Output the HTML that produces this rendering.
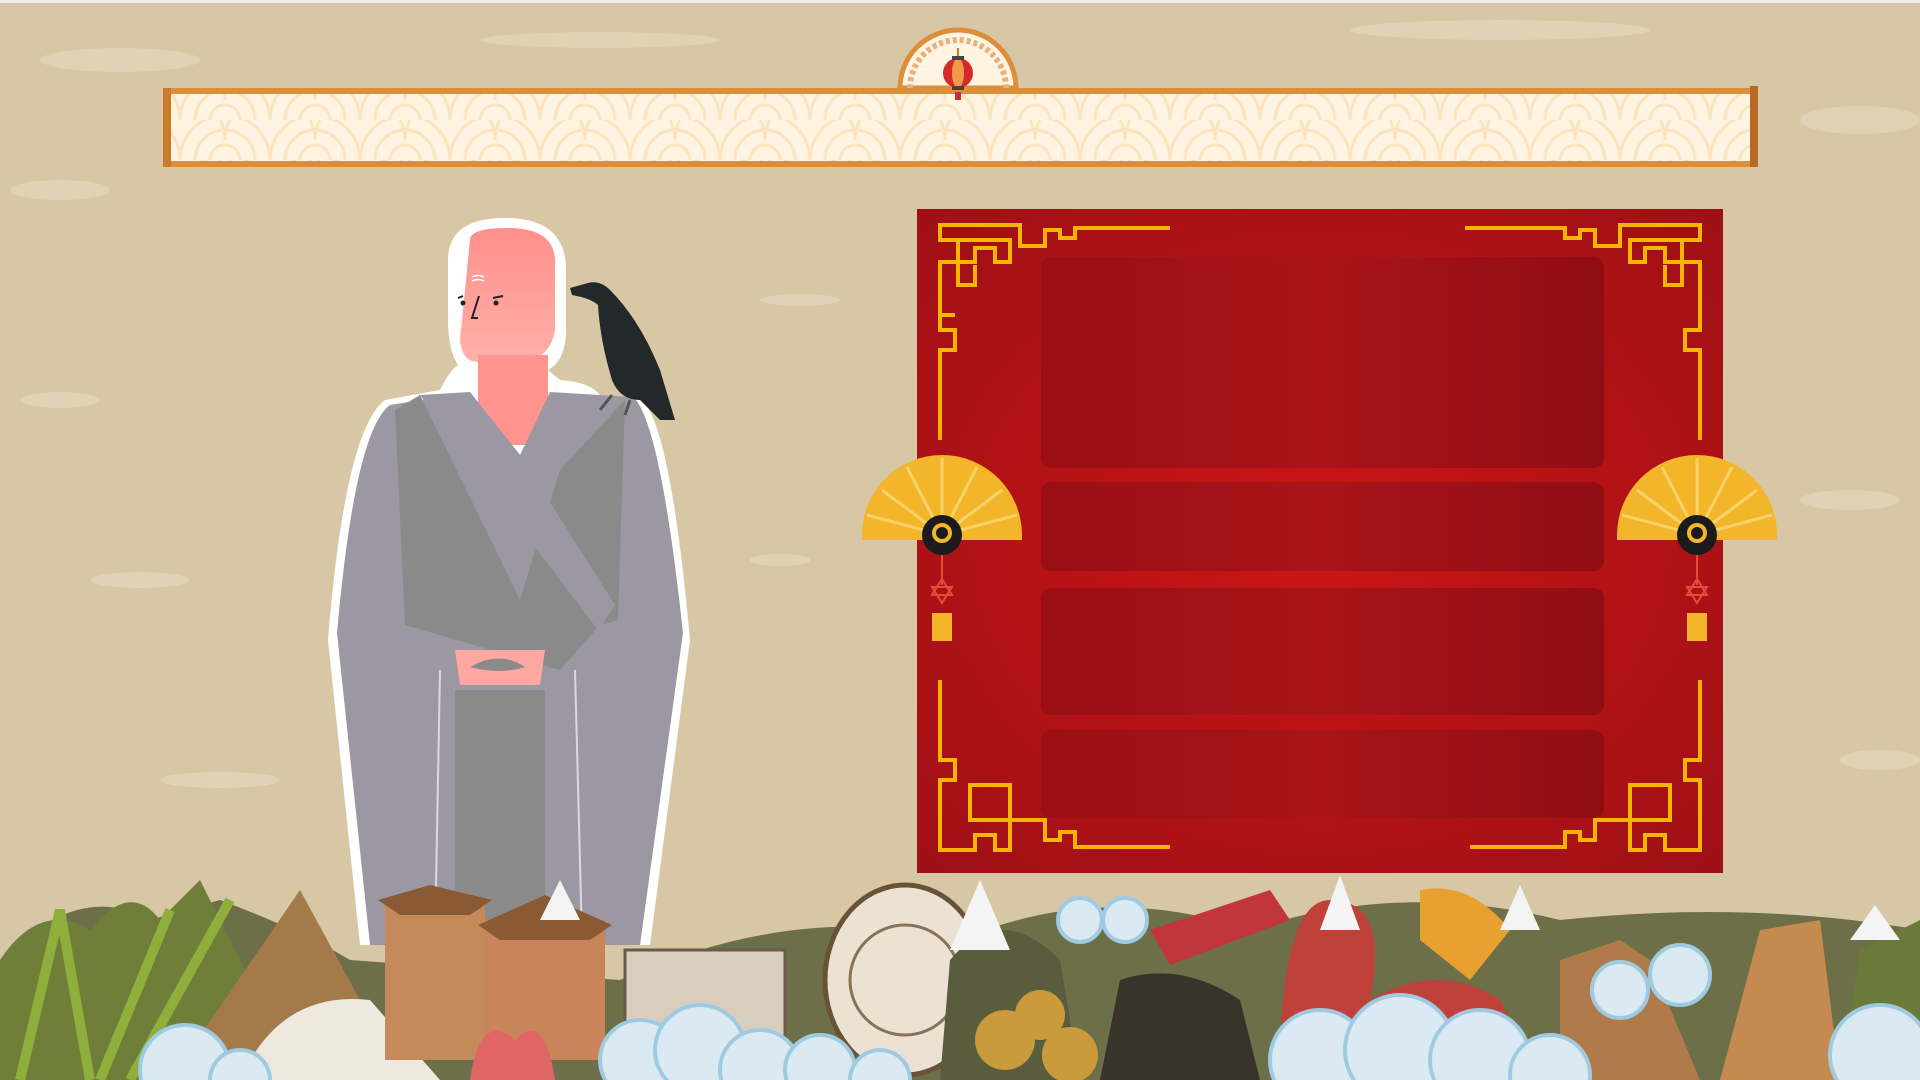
<!DOCTYPE html>
<html><head><meta charset="utf-8"><style>
html,body{margin:0;padding:0;width:1920px;height:1080px;overflow:hidden;background:#d8c7a4;font-family:"Liberation Sans",sans-serif}
svg{position:absolute;left:0;top:0}
</style></head><body>
<svg width="1920" height="1080" viewBox="0 0 1920 1080">
<defs>
<radialGradient id="rg" cx="0.5" cy="0.5" r="0.7">
<stop offset="0" stop-color="#cc1414"/><stop offset="1" stop-color="#9e1016"/></radialGradient>
<linearGradient id="row" x1="0" x2="1"><stop offset="0" stop-color="#9a0f14"/><stop offset="0.5" stop-color="#a8141a"/><stop offset="1" stop-color="#900d12"/></linearGradient>
<linearGradient id="skin" x1="0" y1="0" x2="0" y2="1"><stop offset="0" stop-color="#ff8f8a"/><stop offset="1" stop-color="#ffb0aa"/></linearGradient>
<pattern id="wave" width="90" height="40" patternUnits="userSpaceOnUse">
<rect width="90" height="40" fill="#fff4e2"/>
<path d="M0 40 A45 45 0 0 1 90 40 M15 40 A30 30 0 0 1 75 40 M30 40 A15 15 0 0 1 60 40 M-45 20 A45 45 0 0 1 45 20 M45 20 A45 45 0 0 1 135 20" fill="none" stroke="#fde4bf" stroke-width="3"/>
</pattern>
<g id="fan">
<path d="M0 80 A80 80 0 0 1 160 80 L160 85 L0 85Z" fill="#f3b52a"/>
<path d="M80 80 L5 60 M80 80 L20 35 M80 80 L45 12 M80 80 L80 3 M80 80 L115 12 M80 80 L140 35 M80 80 L155 60" stroke="#f9d36a" stroke-width="3"/>
<circle cx="80" cy="80" r="20" fill="#1b1b1b"/><circle cx="80" cy="78" r="8" fill="none" stroke="#f3b52a" stroke-width="4"/>
<line x1="80" y1="100" x2="80" y2="130" stroke="#e84a3a" stroke-width="2"/>
<path d="M70 140 L90 140 L80 124Z M70 132 L90 132 L80 148Z" fill="none" stroke="#e84a3a" stroke-width="2"/>
<rect x="70" y="158" width="20" height="28" fill="#f3b52a"/>
</g>
</defs>
<g fill="#e6dbc3" opacity="0.55">
<ellipse cx="120" cy="60" rx="80" ry="12"/><ellipse cx="600" cy="40" rx="120" ry="8"/><ellipse cx="1500" cy="30" rx="150" ry="10"/>
<ellipse cx="60" cy="400" rx="40" ry="8"/><ellipse cx="1850" cy="500" rx="50" ry="10"/><ellipse cx="220" cy="780" rx="60" ry="8"/><ellipse cx="800" cy="300" rx="40" ry="6"/>
<ellipse cx="1860" cy="120" rx="60" ry="14"/><ellipse cx="60" cy="190" rx="50" ry="10"/><ellipse cx="1880" cy="760" rx="40" ry="10"/><ellipse cx="780" cy="560" rx="30" ry="6"/><ellipse cx="140" cy="580" rx="50" ry="8"/>
</g>
<rect x="0" y="0" width="1920" height="3" fill="#eee"/>
<path d="M900 88 A58 58 0 0 1 1016 88Z" fill="#fff4e2" stroke="#dc8e3a" stroke-width="5"/>
<path d="M910 88 A48 48 0 0 1 1006 88" fill="none" stroke="#e8b07a" stroke-width="6" stroke-dasharray="4 3"/>
<rect x="163" y="88" width="1593" height="78" fill="url(#wave)"/>
<rect x="163" y="88" width="1593" height="6" fill="#dc8e3a"/>
<rect x="163" y="161" width="1593" height="6" fill="#dc8e3a"/>
<rect x="163" y="88" width="8" height="79" fill="#c97a2a"/>
<rect x="1750" y="86" width="8" height="81" fill="#b86a24"/>
<line x1="958" y1="48" x2="958" y2="60" stroke="#c97a2a" stroke-width="2"/>
<ellipse cx="958" cy="73" rx="15" ry="15" fill="#d52a2a"/>
<ellipse cx="958" cy="73" rx="6" ry="15" fill="#ee9a4a"/>
<rect x="952" y="56" width="12" height="4" fill="#444"/><rect x="952" y="86" width="12" height="4" fill="#444"/>
<rect x="955" y="92" width="6" height="8" fill="#d52a2a"/>
<rect x="917" y="209" width="806" height="664" fill="url(#rg)"/>
<rect x="1041" y="257" width="563" height="211" rx="10" fill="url(#row)"/>
<rect x="1041" y="482" width="563" height="89" rx="10" fill="url(#row)"/>
<rect x="1041" y="588" width="563" height="127" rx="10" fill="url(#row)"/>
<rect x="1041" y="730" width="563" height="88" rx="10" fill="url(#row)"/>
<g fill="none" stroke="#f5b400" stroke-width="4">
<path d="M940 440 L940 350 L955 350 L955 330 L940 330 L940 262 L975 262 L975 248 L995 248 L995 262 L1010 262 L1010 240 L940 240 L940 225 L1020 225 L1020 246 L1045 246 L1045 230 L1060 230 L1060 238 L1075 238 L1075 228 L1170 228"/>
<path d="M958 242 L958 285 L975 285 L975 265 M940 315 L955 315"/>
<path d="M1700 440 L1700 350 L1685 350 L1685 330 L1700 330 L1700 262 L1665 262 L1665 248 L1645 248 L1645 262 L1630 262 L1630 240 L1700 240 L1700 225 L1620 225 L1620 246 L1595 246 L1595 230 L1580 230 L1580 238 L1565 238 L1565 228 L1465 228"/>
<path d="M1682 242 L1682 285 L1665 285 L1665 265"/>
<path d="M940 680 L940 760 L955 760 L955 780 L940 780 L940 850 L975 850 L975 835 L995 835 L995 850 L1010 850 L1010 785 L970 785 L970 820 L1045 820 L1045 840 L1060 840 L1060 832 L1075 832 L1075 847 L1170 847"/>
<path d="M1700 680 L1700 760 L1685 760 L1685 780 L1700 780 L1700 850 L1665 850 L1665 835 L1645 835 L1645 850 L1630 850 L1630 785 L1670 785 L1670 820 L1595 820 L1595 840 L1580 840 L1580 832 L1565 832 L1565 847 L1470 847"/>
</g>
<use href="#fan" x="862" y="455"/>
<use href="#fan" x="1617" y="455"/>
<g>
<path d="M448 260 Q448 218 505 218 Q566 218 566 270 L566 330 Q566 360 548 370 L560 380 Q590 382 600 395 L640 398 Q670 420 690 640 L650 945 L360 945 L328 640 Q345 430 385 400 L440 390 Q450 370 458 365 Q448 350 448 320Z" fill="#fff"/>
<path d="M470 240 Q470 228 508 228 Q555 228 555 262 L555 330 Q550 360 520 362 L478 362 Q462 362 460 340Z" fill="url(#skin)"/>
<rect x="478" y="355" width="70" height="90" fill="#ff938d"/>
<path d="M390 405 L470 392 L520 455 L550 392 L633 397 Q660 420 683 633 L640 945 L370 945 L337 633 Q355 430 390 405Z" fill="#9c98a3"/>
<path d="M395 410 L420 395 L520 600 L560 470 L625 400 L618 620 L600 625 L560 670 L405 625Z" fill="#8a8a8a"/>
<path d="M420 395 L470 392 L520 455 L615 605 L598 630Z" fill="#9c98a3"/>
<path d="M455 650 L545 650 L540 685 L460 685Z" fill="#ffa8a2"/>
<path d="M470 667 Q500 650 525 667 Q500 675 470 667Z" fill="#8a8a8a"/>
<rect x="455" y="690" width="90" height="255" fill="#8a8a8a"/>
<line x1="440" y1="670" x2="435" y2="940" stroke="#dcd8e0" stroke-width="2"/>
<line x1="575" y1="670" x2="582" y2="940" stroke="#dcd8e0" stroke-width="2"/>
<path d="M458 298 L463 296 M493 298 L503 296" stroke="#222" stroke-width="2"/>
<circle cx="463" cy="303" r="2.5" fill="#222"/><circle cx="496" cy="303" r="2.5" fill="#222"/>
<path d="M479 296 L472 318 L478 318" fill="none" stroke="#222" stroke-width="2"/>
<path d="M472 277 Q478 274 484 277 M472 281 Q478 278 484 281" stroke="#fff" stroke-width="1.5" fill="none"/>
</g>
<path d="M570 288 L588 283 Q600 280 610 290 Q640 320 660 370 L675 420 L660 420 L640 400 Q620 400 612 380 Q600 340 598 305 Q590 298 572 295Z" fill="#23282b"/>
<path d="M612 395 L600 410 M630 400 L625 415" stroke="#555" stroke-width="3"/>
<!-- bottom -->
<g>
<path d="M0 1080 L0 960 Q80 880 150 920 L220 900 Q300 930 350 960 L620 980 Q800 900 960 940 Q1100 880 1250 930 Q1400 880 1560 920 Q1750 900 1920 930 L1920 1080Z" fill="#6c6f48"/>
<path d="M0 1080 L0 960 Q40 900 90 930 Q130 880 160 920 L200 880 L260 1000 L300 890 L350 1080Z" fill="#6f7f3a"/>
<path d="M20 1080 L60 910 L90 1080 M100 1080 L170 910 M130 1080 L230 900" stroke="#8fae3c" stroke-width="10" fill="none"/>
<path d="M170 1080 L300 890 L360 1000 L380 1080Z" fill="#a57a4a"/>
<path d="M240 1080 Q280 990 370 1000 L440 1080Z" fill="#efe8df"/>
<rect x="385" y="900" width="100" height="160" fill="#c48a5a"/>
<path d="M378 900 L430 885 L492 900 L470 915 L400 915Z" fill="#8a5a34"/>
<rect x="485" y="920" width="120" height="140" fill="#c9845a"/>
<path d="M478 925 L545 895 L612 925 L590 940 L500 940Z" fill="#8a5a34"/>
<path d="M470 1080 Q480 1010 515 1040 Q545 1010 555 1080Z" fill="#e06565"/>
<rect x="625" y="950" width="160" height="110" fill="#d9cdbd" stroke="#6a5a4a" stroke-width="3"/>
<ellipse cx="905" cy="980" rx="80" ry="95" fill="#ece2d4" stroke="#6a5236" stroke-width="5"/>
<circle cx="905" cy="980" r="55" fill="none" stroke="#8a7256" stroke-width="3"/>
<path d="M940 1080 L950 960 Q1000 900 1060 960 L1080 1080Z" fill="#5a5c3e"/>
<circle cx="1005" cy="1040" r="30" fill="#c99b3a"/><circle cx="1070" cy="1055" r="28" fill="#c99b3a"/><circle cx="1040" cy="1015" r="25" fill="#c99b3a"/>
<path d="M1150 930 L1270 890 L1290 920 L1170 965Z" fill="#c0363a"/>
<path d="M1100 1080 L1120 980 Q1180 960 1240 1000 L1260 1080Z" fill="#3a332c"/>
<path d="M1280 1080 Q1280 900 1330 900 Q1390 900 1370 1000 Q1440 960 1500 1000 L1540 1080Z" fill="#c0403a"/>
<path d="M1420 890 Q1470 880 1510 930 L1470 980 L1420 940Z" fill="#e8a030"/>
<path d="M1560 1080 L1560 960 L1620 940 L1650 960 L1700 1080Z" fill="#b07a4a"/>
<path d="M1720 1080 L1760 930 L1820 920 L1840 1080Z" fill="#c48a50"/>
<path d="M1840 1080 L1860 950 L1920 920 L1920 1080Z" fill="#6a7a3a"/>
<g fill="#dbeaf2" stroke="#9fcbe2" stroke-width="4">
<circle cx="185" cy="1070" r="45"/><circle cx="240" cy="1080" r="30"/>
<circle cx="640" cy="1060" r="40"/><circle cx="700" cy="1050" r="45"/><circle cx="760" cy="1070" r="40"/><circle cx="820" cy="1070" r="35"/><circle cx="880" cy="1080" r="30"/>
<circle cx="1320" cy="1060" r="50"/><circle cx="1400" cy="1050" r="55"/><circle cx="1480" cy="1060" r="50"/><circle cx="1550" cy="1075" r="40"/>
<circle cx="1880" cy="1055" r="50"/><circle cx="1620" cy="990" r="28"/><circle cx="1680" cy="975" r="30"/><circle cx="1080" cy="920" r="22"/><circle cx="1125" cy="920" r="22"/>
</g>
<path d="M950 950 L980 880 L1010 950Z M1320 930 L1340 875 L1360 930Z M1500 930 L1520 885 L1540 930Z M540 920 L560 880 L580 920Z M1850 940 L1875 905 L1900 940Z" fill="#f4f4f4"/>
</g>
</svg>
</body></html>
